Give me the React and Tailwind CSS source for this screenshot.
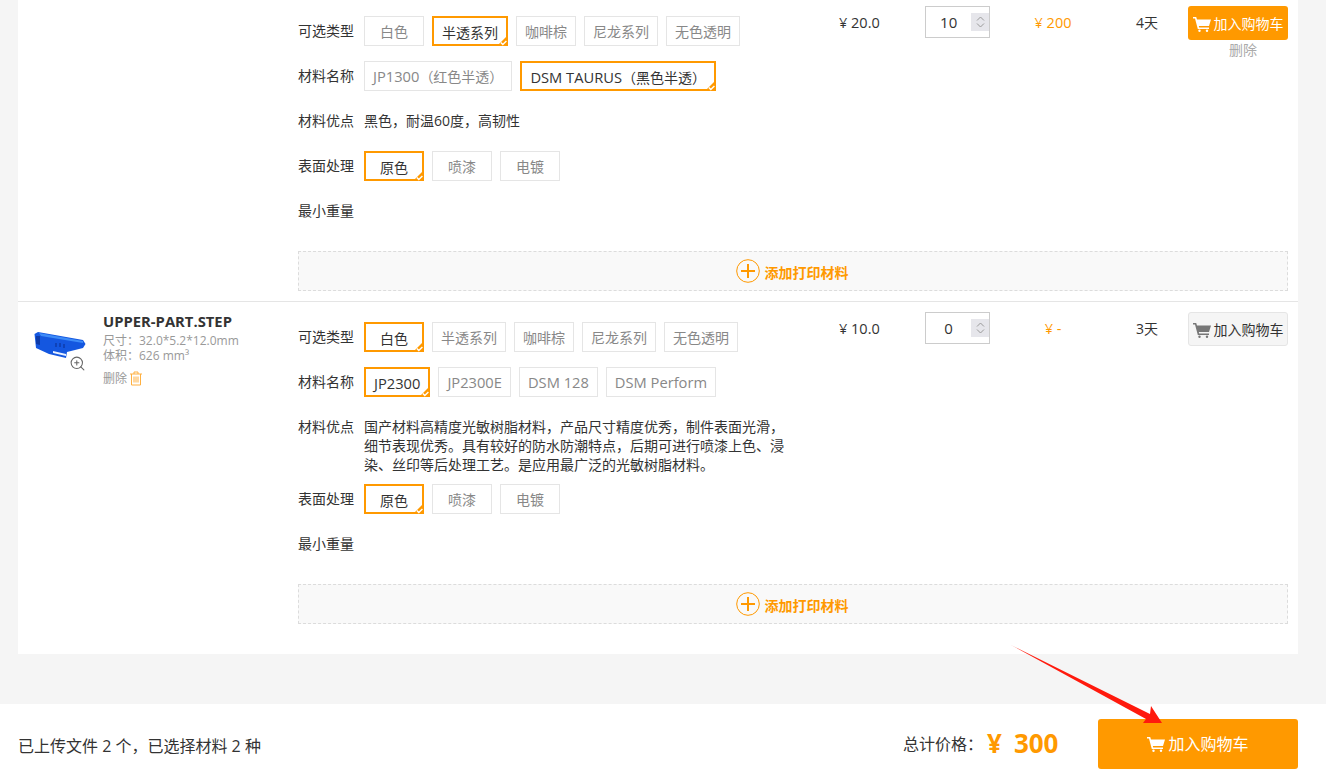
import React from 'react'
import { ZoomIn } from 'lucide-react'

function CartIcon({ className }) {
    return (
        <svg className={className} viewBox="0 0 18 16" fill="currentColor">
            <path d="M0 1h3.2l.8 2.4H18l-2 6.6H5.8l.4 1.4H16V13H4.8L2 2.6H0z" />
            <circle cx="6.5" cy="14.8" r="1.2" />
            <circle cx="14" cy="14.8" r="1.2" />
        </svg>
    )
}

// latin part of a label renders a bit bigger than the chinese part
function TagText({ text }) {
    const parts = text.split(/(（.*）)/)
    return parts.map((p, i) => (
        <span key={i} className={/^[A-Za-z0-9 ]+$/.test(p) ? 'text-[14.7px]' : 'text-sm'}>{p}</span>
    ))
}

function Tag({ text, active }) {
    if (active) {
        return (
            <div className="relative h-[30px] min-w-[60px] px-2 pt-[3px] border-2 border-[#ff9900] flex items-center justify-center text-[#333] whitespace-nowrap">
                <TagText text={text} />
                <svg className="absolute right-[-2px] bottom-[-2px] w-[11px] h-[11px]" viewBox="0 0 11 11">
                    <polygon points="11,0 11,11 0,11" fill="#ff9900" />
                    <path d="M3.8 7.6l2 2L9.4 6" fill="none" stroke="#fff" strokeWidth="1.4" />
                </svg>
            </div>
        )
    }
    return (
        <div className="h-[30px] min-w-[60px] px-2 pt-[1px] border border-[#e5e5e5] flex items-center justify-center text-[#888] whitespace-nowrap">
            <TagText text={text} />
        </div>
    )
}

function OptionRow({ label, children, className = 'mb-[15px]' }) {
    return (
        <div className={`flex ${className}`}>
            <div className="w-[66px] h-[30px] shrink-0 flex items-center text-[#333]">{label}</div>
            {children}
        </div>
    )
}

function Tags({ items, active }) {
    return (
        <div className="flex gap-2">
            {items.map((t) => (
                <Tag key={t} text={t} active={t === active} />
            ))}
        </div>
    )
}

function AddMaterial() {
    return (
        <div className="h-10 pr-[2px] border border-dashed border-[#dcdcdc] bg-[#f9f9f9] flex items-center justify-center gap-[5px] text-sm font-bold text-[#ff9900]">
            <svg className="w-6 h-6" viewBox="0 0 24 24" fill="none" stroke="#ff9900">
                <circle cx="12" cy="12" r="11.3" strokeWidth="1" />
                <path d="M12 5v14M5 12h14" strokeWidth="2" />
            </svg>
            <span className="pt-[3px]">添加打印材料</span>
        </div>
    )
}

function QtyInput({ value }) {
    return (
        <div className="w-[65px] h-[32px] border border-[#ccc] flex items-center relative">
            <span className="w-[46px] text-center text-[15px] pt-[1px] text-[#333]">{value}</span>
            <div className="w-[18px] h-[18px] bg-[#e6e6eb] flex flex-col items-center justify-center gap-[2px]">
                <svg className="w-[9px] h-[5px]" viewBox="0 0 9 5" fill="none" stroke="#999"><path d="M1 4.5l3.5-3.5 3.5 3.5" /></svg>
                <svg className="w-[9px] h-[5px]" viewBox="0 0 9 5" fill="none" stroke="#999"><path d="M1 .5l3.5 3.5 3.5-3.5" /></svg>
            </div>
        </div>
    )
}

function PartThumb() {
    return (
        <div className="relative w-[85px] h-[56px] shrink-0">
            <svg className="absolute left-[15px] top-[1px] w-[54px] h-[28px]" viewBox="0 0 54 28">
                <polygon points="1.5,2 5,0 50,8 52.5,12 50,16 34,20 33,26 16,22 3,16" fill="#1457e0" />
                <polygon points="3,4 7,4 7,13 3,12" fill="#0d3aa8" />
                <polygon points="6,1 50,9 50,11 8,4" fill="#3d8bf7" />
                <polygon points="20,19 33,22 33,24 20,21" fill="#eaf1ff" />
                <path d="M23 11v4M27 11v4M31 12v4" stroke="#0a2f8f" strokeWidth="1" />
            </svg>
            <ZoomIn className="absolute left-[51px] top-[24px] w-[17px] h-[17px] text-[#666]" strokeWidth={1.5} />
        </div>
    )
}

function PartInfo() {
    return (
        <div className="w-[280px] shrink-0 flex">
            <div className="pt-[19px]"><PartThumb /></div>
            <div className="text-xs text-[#999] leading-[15px]">
                <div className="text-[14.8px] font-bold text-[#333] leading-[20px] whitespace-nowrap -mt-[1px] mb-[2px]">UPPER-PART.STEP</div>
                <div className="whitespace-nowrap">尺寸：32.0*5.2*12.0mm</div>
                <div>体积：626 mm³</div>
                <div className="flex items-center gap-[2px] mt-[8px]">
                    删除
                    <svg className="w-[14px] h-[15px]" viewBox="0 0 14 15" fill="none" stroke="#ffb040" strokeWidth="1">
                        <path d="M1 3h12M5 3V1h4v2M2.5 3v11h9V3M5 5.5v6M7 5.5v6M9 5.5v6" />
                    </svg>
                </div>
            </div>
        </div>
    )
}

function RowBody({ price, qty, total, days, inCart, showDelete, children }) {
    return (
        <div className="flex">
            <div className="w-[512px] pt-[10px]">{children}</div>
            <div className="w-[115px] pl-[29px] h-[34px] flex items-center text-[14.5px] text-[#333]">¥ {price}</div>
            <QtyInput value={qty} />
            <div className="w-[126px] h-[34px] flex items-center justify-center text-[14.5px] text-[#ff9900]">¥ {total}</div>
            <div className="w-[72px] pl-5 h-[34px] flex items-center text-[#333]">{days}</div>
            <div className="w-[100px]">
                {inCart ? (
                    <div className="h-[34px] pt-[1px] rounded-[3px] bg-[#ff9900] text-white flex items-center justify-center gap-[3px] whitespace-nowrap">
                        <CartIcon className="w-[18px] h-[16px]" />
                        加入购物车
                    </div>
                ) : (
                    <div className="h-[34px] pt-[1px] rounded-[3px] bg-[#f5f5f5] border border-[#e5e5e5] text-[#333] flex items-center justify-center gap-[3px] whitespace-nowrap">
                        <CartIcon className="w-[18px] h-[16px] text-[#777]" />
                        加入购物车
                    </div>
                )}
                {showDelete && <div className="pl-[10px] text-[#aaa] text-center leading-[20px]">删除</div>}
            </div>
        </div>
    )
}

export default function App() {
    return (
        <div className="relative h-[781px] overflow-hidden bg-[#f5f5f5] text-sm font-['Open_Sans','Noto_Sans_CJK_SC',sans-serif]">
            <div className="mx-[18px] w-[1280px] h-[654px] bg-white">
                <div className="border-b border-[#e5e5e5] pt-[6px] pb-[10px] pr-[10px] flex">
                    <div className="w-[280px] shrink-0" />
                    <div className="flex-1">
                        <RowBody price="20.0" qty="10" total="200" days="4天" inCart showDelete>
                            <OptionRow label="可选类型">
                                <Tags items={['白色', '半透系列', '咖啡棕', '尼龙系列', '无色透明']} active="半透系列" />
                            </OptionRow>
                            <OptionRow label="材料名称">
                                <Tags items={['JP1300（红色半透）', 'DSM TAURUS（黑色半透）']} active="DSM TAURUS（黑色半透）" />
                            </OptionRow>
                            <OptionRow label="材料优点">
                                <div className="pt-[5px] leading-[19px] text-[#333]">黑色，耐温60度，高韧性</div>
                            </OptionRow>
                            <OptionRow label="表面处理">
                                <Tags items={['原色', '喷漆', '电镀']} active="原色" />
                            </OptionRow>
                            <OptionRow label="最小重量" className="mb-[25px]" />
                        </RowBody>
                        <AddMaterial />
                    </div>
                </div>
                <div className="pt-[10px] pr-[10px] flex">
                    <PartInfo />
                    <div className="flex-1">
                        <RowBody price="10.0" qty="0" total="-" days="3天">
                            <OptionRow label="可选类型">
                                <Tags items={['白色', '半透系列', '咖啡棕', '尼龙系列', '无色透明']} active="白色" />
                            </OptionRow>
                            <OptionRow label="材料名称">
                                <Tags items={['JP2300', 'JP2300E', 'DSM 128', 'DSM Perform']} active="JP2300" />
                            </OptionRow>
                            <OptionRow label="材料优点" className="mb-[10px]">
                                <div className="pt-[5px] w-[422px] leading-[19px] text-[#333]">
                                    国产材料高精度光敏树脂材料，产品尺寸精度优秀，制件表面光滑，细节表现优秀。具有较好的防水防潮特点，后期可进行喷漆上色、浸染、丝印等后处理工艺。是应用最广泛的光敏树脂材料。
                                </div>
                            </OptionRow>
                            <OptionRow label="表面处理">
                                <Tags items={['原色', '喷漆', '电镀']} active="原色" />
                            </OptionRow>
                            <OptionRow label="最小重量" className="mb-[25px]" />
                        </RowBody>
                        <AddMaterial />
                    </div>
                </div>
            </div>

            <div className="mt-[50px] h-[77px] bg-white pl-[18px] pr-[28px] pt-[3px] flex items-center justify-between">
                <div className="text-base pt-[3px] text-[#333]">已上传文件 2 个，已选择材料 2 种</div>
                <div className="flex items-center">
                    <span className="text-base text-[#333]">总计价格：</span>
                    <span className="w-[115px] pl-[4px] text-[26px] font-bold text-[#ff9900] flex">
                        <span>¥</span>
                        <span className="ml-[12px]">300</span>
                    </span>
                    <div className="w-[200px] h-[50px] rounded-[3px] bg-[#ff9900] text-white text-base flex items-center justify-center gap-[3px]">
                        <CartIcon className="w-[18px] h-[16px]" />
                        加入购物车
                    </div>
                </div>
            </div>

            {/* red arrow annotation */}
            <svg className="absolute left-[1005px] top-[640px] w-[165px] h-[90px]" viewBox="1005 640 165 90">
                <polygon points="1011,645 1150,714 1151,706 1162,723 1143,723 1146,719" fill="#ff1a0d" />
            </svg>
        </div>
    )
}
